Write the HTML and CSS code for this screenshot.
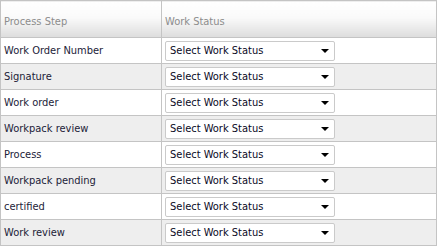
FILE: index.html
```html
<!DOCTYPE html>
<html>
<head>
<meta charset="utf-8">
<link rel="stylesheet" href="styles.css">
</head>
<body>
<table class="grid">
  <thead>
    <tr><th class="c1">Process Step</th><th class="c2">Work Status</th></tr>
  </thead>
  <tbody>
    <tr><td>Work Order Number</td><td><div class="sel"><span>Select Work Status</span><i class="arr"></i></div></td></tr>
    <tr class="alt"><td>Signature</td><td><div class="sel"><span>Select Work Status</span><i class="arr"></i></div></td></tr>
    <tr><td>Work order</td><td><div class="sel"><span>Select Work Status</span><i class="arr"></i></div></td></tr>
    <tr class="alt"><td>Workpack review</td><td><div class="sel"><span>Select Work Status</span><i class="arr"></i></div></td></tr>
    <tr><td>Process</td><td><div class="sel"><span>Select Work Status</span><i class="arr"></i></div></td></tr>
    <tr class="alt"><td>Workpack pending</td><td><div class="sel"><span>Select Work Status</span><i class="arr"></i></div></td></tr>
    <tr><td>certified</td><td><div class="sel"><span>Select Work Status</span><i class="arr"></i></div></td></tr>
    <tr class="alt"><td>Work review</td><td><div class="sel"><span>Select Work Status</span><i class="arr"></i></div></td></tr>
  </tbody>
</table>
</body>
</html>
```
FILE: styles.css
```css
html, body { margin: 0; padding: 0; background: #fff; }
body { font-family: "DejaVu Sans Condensed", "DejaVu Sans", sans-serif; font-size: 11px; color: #1c1c38; }
.grid {
  border-collapse: collapse;
  width: 437px;
  table-layout: fixed;
}
.grid th, .grid td {
  border: 1px solid #c4c4c4;
  padding: 0 0 0 3px;
  text-align: left;
  font-weight: normal;
}
.grid th {
  height: 37px;
  color: #8c8c8c;
  background: linear-gradient(#ffffff 0%, #fafafa 45%, #dcdcdc 100%);
  border-bottom: 1px solid #c4c4c4;
  padding-top: 4px;
  box-sizing: border-box;
}
.grid .c1 { width: 161px; }
.grid td { height: 26px; box-sizing: border-box; }
.grid tr.alt td { background: #eeeeee; }
.sel {
  width: 170px;
  height: 20px;
  box-sizing: border-box;
  border: 1px solid #cacaca;
  border-radius: 2px;
  background: #fff;
  display: flex;
  align-items: center;
  justify-content: space-between;
  padding: 0 5px 0 4px;
  color: #0a0a1e;
}
.arr {
  width: 0; height: 0;
  border-left: 4px solid transparent;
  border-right: 4px solid transparent;
  border-top: 4px solid #000;
  margin-top: 1px;
}
```
